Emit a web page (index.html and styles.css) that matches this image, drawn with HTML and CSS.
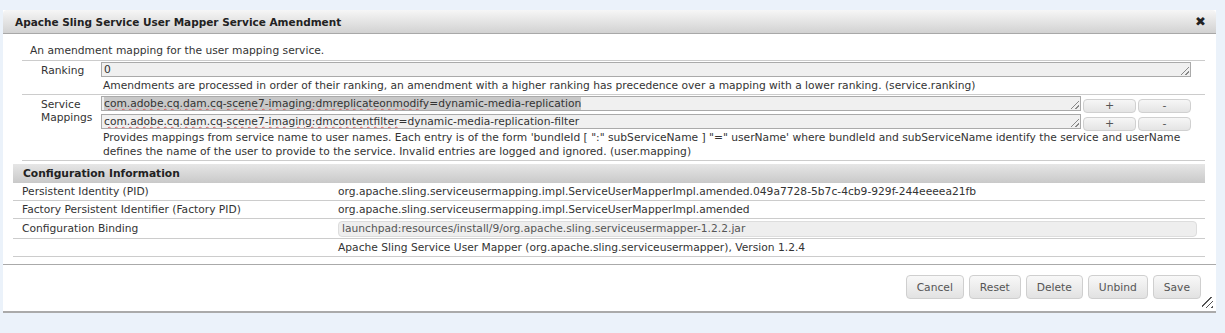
FILE: index.html
```html
<!DOCTYPE html>
<html lang="en">
<head>
    <meta charset="UTF-8">
    <title>Apache Sling Service User Mapper Service Amendment</title>
    <link rel="stylesheet" href="styles.css">
</head>
<body>
    <div class="dialog">
        <div class="titlebar">
            <span class="title">Apache Sling Service User Mapper Service Amendment</span>
            <span class="close">&#10006;</span>
        </div>
        <div class="content">
            <div class="props">
                <div class="intro">An amendment mapping for the user mapping service.</div>
                <div class="prop">
                    <div class="prop-label">Ranking</div>
                    <div class="prop-body">
                        <div class="field wide">0<span class="grip"></span></div>
                        <div class="desc">Amendments are processed in order of their ranking, an amendment with a higher ranking has precedence over a mapping with a lower ranking. (service.ranking)</div>
                    </div>
                </div>
                <div class="prop">
                    <div class="prop-label">Service<br>Mappings</div>
                    <div class="prop-body">
                        <div class="multi">
                            <div class="field selected"><span class="sel"><span class="spell">com.adobe.cq.dam.cq-scene7-imaging:dmreplicateonmodify</span>=dynamic-media-replication</span><span class="grip"></span></div>
                            <button class="small-btn">+</button>
                            <button class="small-btn">-</button>
                        </div>
                        <div class="multi">
                            <div class="field"><span class="spell">com.adobe.cq.dam.cq-scene7-imaging:dmcontentfilter</span>=dynamic-media-replication-filter<span class="grip"></span></div>
                            <button class="small-btn">+</button>
                            <button class="small-btn">-</button>
                        </div>
                        <div class="desc">Provides mappings from service name to user names. Each entry is of the form 'bundleId [ ":" subServiceName ] "=" userName' where bundleId and subServiceName identify the service and userName defines the name of the user to provide to the service. Invalid entries are logged and ignored. (user.mapping)</div>
                    </div>
                </div>
            </div>

            <div class="config">
                <div class="config-head">Configuration Information</div>
                <div class="config-row">
                    <div class="config-key">Persistent Identity (PID)</div>
                    <div class="config-val">org.apache.sling.serviceusermapping.impl.ServiceUserMapperImpl.amended.049a7728-5b7c-4cb9-929f-244eeeea21fb</div>
                </div>
                <div class="config-row">
                    <div class="config-key">Factory Persistent Identifier (Factory PID)</div>
                    <div class="config-val">org.apache.sling.serviceusermapping.impl.ServiceUserMapperImpl.amended</div>
                </div>
                <div class="config-row tall">
                    <div class="config-key">Configuration Binding</div>
                    <div class="config-val"><div class="binding">launchpad:resources/install/9/org.apache.sling.serviceusermapper-1.2.2.jar</div></div>
                </div>
                <div class="config-row">
                    <div class="config-key"></div>
                    <div class="config-val">Apache Sling Service User Mapper (org.apache.sling.serviceusermapper), Version 1.2.4</div>
                </div>
            </div>
        </div>
        <div class="buttonpane">
            <button class="btn">Cancel</button>
            <button class="btn">Reset</button>
            <button class="btn">Delete</button>
            <button class="btn">Unbind</button>
            <button class="btn">Save</button>
            <span class="dialog-grip"></span>
        </div>
    </div>
</body>
</html>
```

FILE: styles.css
```css
body {
    margin: 0;
    background-color: #ebf2fa;
    font-family: 'DejaVu Sans', Verdana, sans-serif;
    font-size: 10.7px;
    color: #333;
}

.dialog {
    margin: 10px 9px 0 3px;
    background-color: #fff;
    border-bottom: 2px solid #aaa;
    box-shadow: 0 2px 0 #d4d8dd;
    position: relative;
}

.titlebar {
    height: 23px;
    display: flex;
    align-items: center;
    justify-content: space-between;
    padding: 0 10px 0 12px;
    background: linear-gradient(#f6f6f6, #d2d2d2);
    border-bottom: 1px solid #a8a8a8;
    border-radius: 4px 4px 0 0;
}
.title {
    font-weight: bold;
    font-size: 10.5px;
    color: #222;
}
.close {
    font-size: 13px;
    color: #222;
}

.content {
    padding: 10px 11px 0 10px;
    height: 220px;
}

.props {
    margin-left: 9px;
}
.intro {
    padding: 0 0 2px 8px;
    line-height: 14px;
    border-bottom: 1px solid #ccc;
}
.prop {
    display: flex;
    border-bottom: 1px solid #ccc;
}
.prop-label {
    width: 60px;
    padding: 3px 0 0 19px;
    line-height: 13px;
}
.prop-body {
    flex: 1;
    padding: 1px 14px 0 0;
}
.field {
    position: relative;
    height: 13px;
    line-height: 13px;
    padding: 0 2px;
    border: 1px solid #aaa;
    background-color: #f0f0f0;
    color: #333;
    white-space: nowrap;
    overflow: hidden;
}
.multi {
    display: flex;
    height: 15px;
}
.multi + .multi {
    margin-top: 3px;
}
.multi .field {
    flex: 1;
}
.sel {
    background-color: #c8c8c8;
}
.spell {
    text-decoration: underline wavy #e05a5a;
    text-decoration-thickness: 1px;
    text-underline-offset: 1px;
}
.grip {
    position: absolute;
    right: 1px;
    bottom: 1px;
    width: 8px;
    height: 8px;
    background: linear-gradient(135deg, transparent 45%, #888 45%, #888 55%, transparent 55%, transparent 75%, #888 75%, #888 85%, transparent 85%);
}
.desc {
    padding: 2px 0 1px 2px;
    line-height: 14px;
}

.small-btn {
    box-sizing: border-box;
    width: 53px;
    height: 14px;
    margin: 3px 0 0 2px;
    padding: 0;
    font-family: inherit;
    font-size: 11px;
    line-height: 12px;
    color: #555;
    background: linear-gradient(#f6f6f6, #e4e4e4);
    border: 1px solid #d0d0d0;
    border-radius: 4px;
}

.config {
    margin-top: 3px;
}
.config-head {
    height: 19px;
    line-height: 19px;
    padding-left: 10px;
    font-weight: bold;
    color: #222;
    background: linear-gradient(#e6e6e6, #c9c9c9);
}
.config-row {
    display: flex;
    align-items: center;
    height: 17px;
    padding: 0 0 0 9px;
    border-bottom: 1px solid #ccc;
}
.config-row.tall {
    height: 19px;
}
.config-key {
    width: 316px;
}
.config-val {
    flex: 1;
    padding-right: 8px;
}
.binding {
    padding: 0 3px;
    height: 14px;
    line-height: 14px;
    background-color: #eee;
    border: 1px solid #ddd;
    border-radius: 4px;
    color: #555;
}

.buttonpane {
    display: flex;
    justify-content: flex-end;
    gap: 5px;
    height: 47px;
    padding: 10px 15px 0 0;
    border-top: 1px solid #aaa;
    box-sizing: border-box;
    position: relative;
}
.btn {
    height: 24px;
    padding: 0 10px;
    font-family: inherit;
    font-size: 10.7px;
    color: #555;
    background: linear-gradient(#f8f8f8, #e2e2e2);
    border: 1px solid #cfcfcf;
    border-radius: 4px;
}
.dialog-grip {
    position: absolute;
    right: 3px;
    bottom: 3px;
    width: 11px;
    height: 11px;
    background: linear-gradient(135deg, transparent 40%, #555 40%, #555 48%, transparent 48%, transparent 64%, #555 64%, #555 72%, transparent 72%, transparent 88%, #555 88%);
}
```
